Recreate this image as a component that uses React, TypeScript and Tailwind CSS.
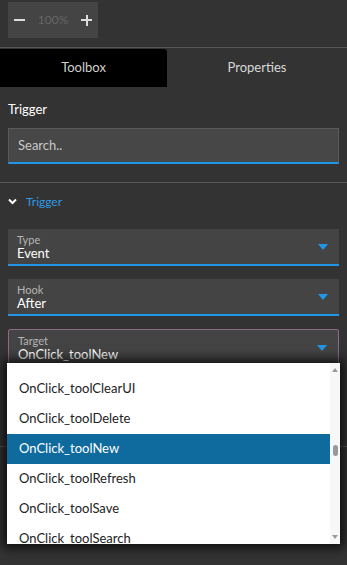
import React from 'react';

const Caret = () => (
  <svg width="10" height="6" viewBox="0 0 10 6" className="shrink-0">
    <path d="M0 0 L10 0 L5 6 Z" fill="#2196e6" />
  </svg>
);

const SelectField = ({ label, value, focused }: { label: string; value: string; focused?: boolean }) => (
  <div
    className={
      focused
        ? 'mx-2 h-[37px] bg-[#444] border border-[#8d6a88] rounded-[2px] flex items-center pl-[9px] pr-[11px]'
        : 'mx-2 h-[37px] bg-[#444] border-b-2 border-[#2196e6] flex items-center pl-[9px] pr-[11px]'
    }
  >
    <div className="flex-1 flex flex-col pt-[1px]">
      <span className="text-[11px] text-[#b5b5b5] leading-[13px]">{label}</span>
      <span className="text-[13px] text-white leading-[15px]">{value}</span>
    </div>
    <Caret />
  </div>
);

const items = ['OnClick_toolClearUI', 'OnClick_toolDelete', 'OnClick_toolNew', 'OnClick_toolRefresh', 'OnClick_toolSave', 'OnClick_toolSearch'];

export default function App() {
  return (
    <div
      className="relative w-[347px] h-[565px] bg-[#333] overflow-hidden"
      style={{ fontFamily: 'Lato, "Noto Sans", sans-serif' }}
    >
      {/* zoom */}
      <div className="pt-[2px] px-2">
        <div className="w-[90px] h-[36px] bg-[#444] flex items-center justify-between px-[4px]">
          <span className="w-[11px] h-[2px] bg-[#ddd] ml-[2px]" />
          <span className="text-[12px] text-[#666]">100%</span>
          <span className="relative w-[11px] h-[11px] mr-[2px]">
            <span className="absolute left-0 top-[4.5px] w-[11px] h-[2px] bg-[#ddd]" />
            <span className="absolute top-0 left-[4.5px] w-[2px] h-[11px] bg-[#ddd]" />
          </span>
        </div>
      </div>
      <div className="mt-[9px] border-t border-[#575757]" />

      {/* tabs */}
      <div className="mt-[1px] flex h-[38px] text-[13px]">
        <div className="w-[167px] bg-black rounded-tr-[3px] flex items-center justify-center text-[#d0d0d0]">Toolbox</div>
        <div className="flex-1 flex items-center justify-center text-[#d8d8d8]">Properties</div>
      </div>

      <div className="px-2 pt-[14px] text-[13px] text-white leading-[16px]">Trigger</div>
      <div className="mx-2 mt-[11px] h-[36px] bg-[#474747] border border-[#5a5a5a] border-b-2 border-b-[#2196e6] flex items-center pl-[9px] text-[13px] text-[#c8c8c8]">
        Search..
      </div>
      <div className="mt-[18px] border-t border-[#575757]" />

      <div className="flex items-center gap-[9px] px-2 h-[37px]">
        <svg width="9" height="7" viewBox="0 0 9 7">
          <path d="M1 1.5 L4.5 5 L8 1.5" stroke="#fff" strokeWidth="2" fill="none" />
        </svg>
        <span className="text-[12px] text-[#2d9be6]">Trigger</span>
      </div>

      <div className="mt-[9px] flex flex-col gap-[13px]">
        <SelectField label="Type" value="Event" />
        <SelectField label="Hook" value="After" />
        <SelectField label="Target" value="OnClick_toolNew" focused />
      </div>

      <div className="mt-[80px] border-t border-[#575757]" />

      {/* dropdown */}
      <div className="absolute left-[7px] top-[363px] w-[333px] h-[181px] bg-white shadow-[0_0_10px_4px_rgba(0,0,0,0.75)] flex overflow-hidden">
        <div className="flex-1 pt-[11px]">
          {items.map((it) => (
            <div
              key={it}
              className={
                it === 'OnClick_toolNew'
                  ? 'h-[30px] flex items-center pl-[12px] text-[13px] bg-[#0f6a9e] text-white'
                  : 'h-[30px] flex items-center pl-[12px] text-[13px] text-[#222]'
              }
            >
              {it}
            </div>
          ))}
        </div>
        <div className="w-[10px] bg-[#f7f7f7] flex flex-col items-center justify-between py-[5px]">
          <svg width="6" height="4" viewBox="0 0 6 4"><path d="M0 4 L6 4 L3 0 Z" fill="#999" /></svg>
          <div className="flex-1 flex flex-col items-center pt-[73px]">
            <div className="w-[5px] h-[11px] rounded-full bg-[#999]" />
          </div>
          <svg width="6" height="4" viewBox="0 0 6 4"><path d="M0 0 L6 0 L3 4 Z" fill="#999" /></svg>
        </div>
      </div>
    </div>
  );
}
